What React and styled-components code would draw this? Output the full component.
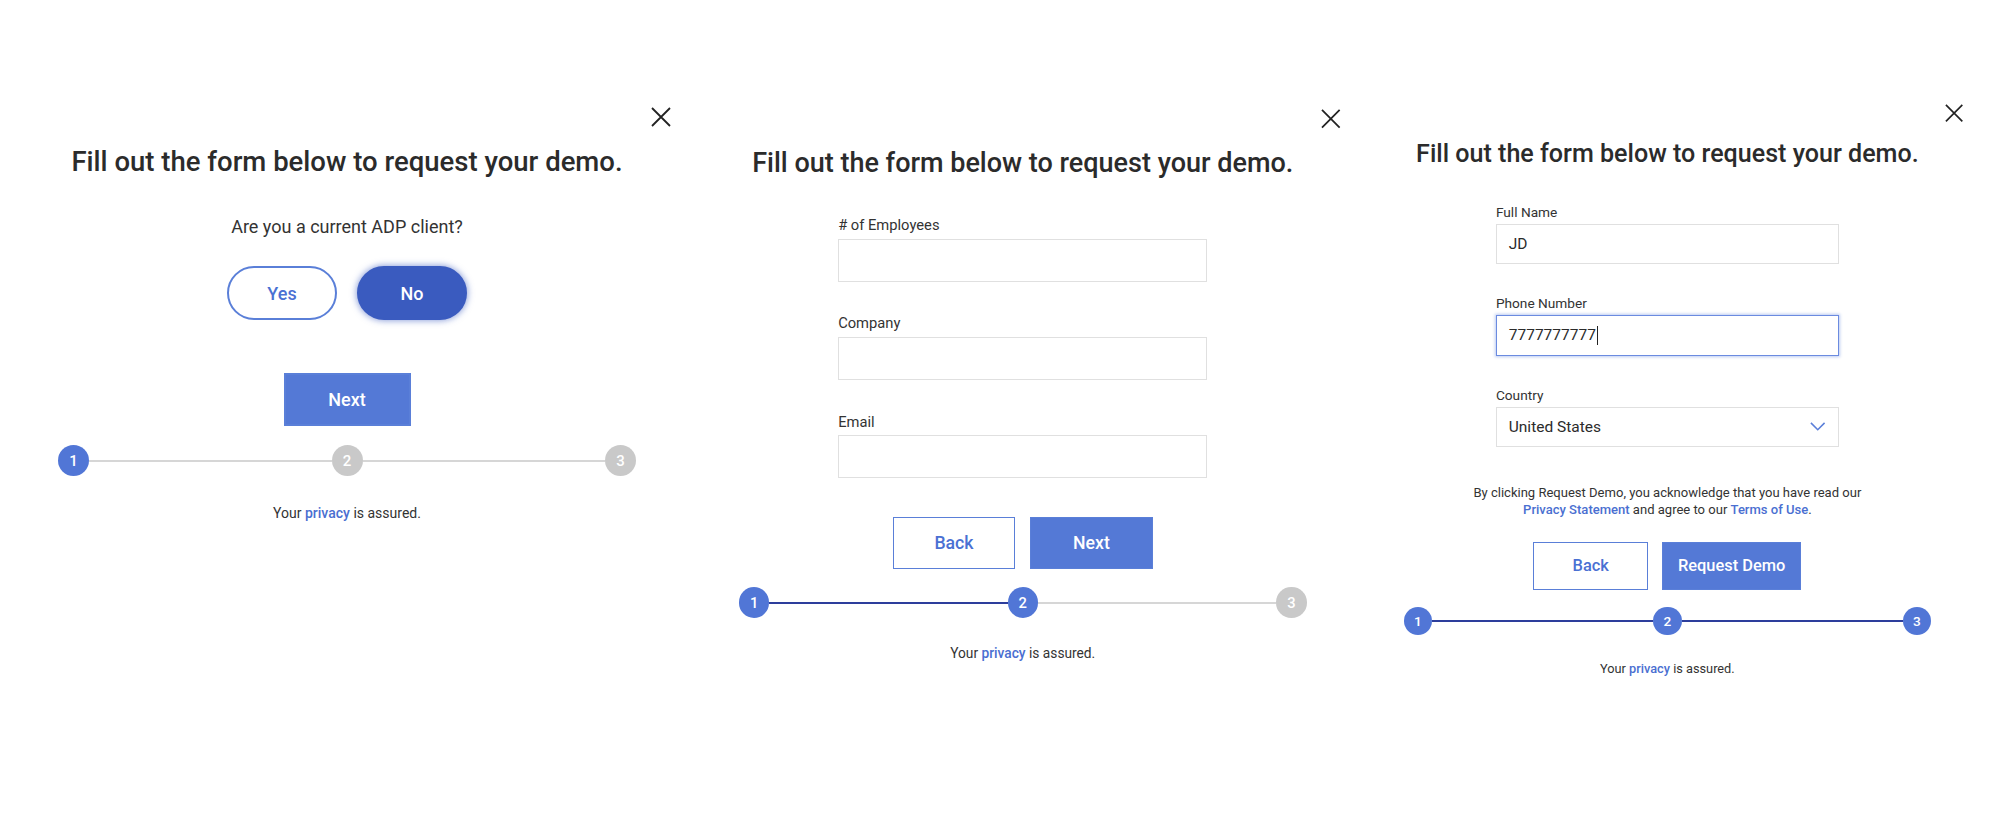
import React from 'react';
import styled, { createGlobalStyle } from 'styled-components';

const GlobalStyle = createGlobalStyle`
  html, body {
    margin: 0;
    background: #ffffff;
    font-family: Roboto, 'Liberation Sans', sans-serif;
    color: #2b2b2b;
  }
`;

const Page = styled.main`
  display: flex;
  align-items: flex-start;
  gap: 100px;
  padding: 71px 0 0 58px;
  min-height: 833px;
  box-sizing: border-box;
`;

const Panel = styled.section`
  position: relative;
  width: 578px;
  zoom: ${(p) => p.$scale};
  margin-top: ${(p) => p.$shift || 0}px;
  margin-left: ${(p) => p.$nudge || 0}px;
  padding-top: 74px;
  display: flex;
  flex-direction: column;
  align-items: center;
`;

const Close = styled.button`
  position: absolute;
  top: 36px;
  right: -35px;
  width: 20px;
  height: 20px;
  padding: 0;
  border: none;
  background: none;
  cursor: pointer;
  color: #222;
`;

const Title = styled.h2`
  margin: 0;
  font-size: 27.5px;
  line-height: 34px;
  font-weight: 500;
  color: #2b2b2b;
  white-space: nowrap;
`;

const Question = styled.p`
  margin: 37px 0 0;
  font-size: 18px;
  line-height: 22px;
  color: #333;
`;

const ChoiceRow = styled.div`
  display: flex;
  gap: 20px;
  margin-top: 28px;
`;

const Pill = styled.button`
  width: 110px;
  height: 54px;
  border-radius: 27px;
  border: 2px solid ${(p) => (p.$selected ? '#3a5bbf' : '#5a7fd8')};
  background: ${(p) => (p.$selected ? '#3a5bbf' : '#fff')};
  color: ${(p) => (p.$selected ? '#fff' : '#4a70d3')};
  box-shadow: ${(p) => (p.$selected ? '0 0 6px 1px rgba(58, 91, 191, 0.55)' : 'none')};
  font-family: inherit;
  font-size: 18px;
  font-weight: 500;
  cursor: pointer;
`;

const ButtonRow = styled.div`
  display: flex;
  justify-content: center;
  gap: 15px;
  margin-top: ${(p) => p.$mt}px;
`;

const Button = styled.button`
  width: ${(p) => p.$width}px;
  height: 53px;
  box-sizing: border-box;
  border: 2px solid #5a7fd8;
  background: ${(p) => (p.$outline ? '#fff' : '#5479d6')};
  color: ${(p) => (p.$outline ? '#4a70d3' : '#fff')};
  font-family: inherit;
  font-size: 18px;
  font-weight: 500;
  cursor: pointer;
`;

const Fields = styled.div`
  width: 376px;
  margin-top: 38px;
  display: flex;
  flex-direction: column;
  gap: 34px;
`;

const Field = styled.label`
  display: flex;
  flex-direction: column;
  gap: 4px;
`;

const Label = styled.span`
  font-size: 15px;
  line-height: 18px;
  color: #333;
`;

const Box = styled.div`
  height: 44px;
  box-sizing: border-box;
  border: 2px solid ${(p) => (p.$focused ? '#6b8be0' : '#e0e0e0')};
  box-shadow: ${(p) => (p.$focused ? '0 0 3px 1px rgba(107, 139, 224, 0.45)' : 'none')};
  padding: 0 13px;
  display: flex;
  align-items: center;
  justify-content: space-between;
  font-size: 17px;
  color: #2b2b2b;
`;

const Value = styled.span`
  display: flex;
  align-items: center;
`;

const Caret = styled.span`
  display: inline-block;
  width: 1.5px;
  height: 20px;
  margin-left: 1px;
  background: #222;
`;

const Consent = styled.p`
  margin: 41px 0 0;
  font-size: 14.3px;
  line-height: 19px;
  text-align: center;
  color: #333;
  white-space: nowrap;
`;

const TextLink = styled.a`
  color: #4a6fd1;
  font-weight: 500;
  text-decoration: none;
`;

const Stepper = styled.div`
  width: 100%;
  margin-top: 19px;
  display: flex;
  align-items: center;
`;

const Dot = styled.span`
  width: 31px;
  height: 31px;
  flex: none;
  border-radius: 50%;
  background: ${(p) => (p.$active ? '#5176d6' : '#c9c9c9')};
  color: #fff;
  font-size: 15px;
  font-weight: 500;
  display: flex;
  align-items: center;
  justify-content: center;
`;

const Track = styled.span`
  flex: 1;
  height: 2px;
  background: ${(p) => (p.$done ? '#2d3e9c' : '#d6d6d6')};
`;

const Privacy = styled.p`
  margin: 28px 0 0;
  font-size: 14px;
  line-height: 18px;
  color: #333;
`;

const CloseIcon = () => (
  <svg width="20" height="20" viewBox="0 0 20 20" fill="none">
    <path d="M1 1 L19 19 M19 1 L1 19" stroke="currentColor" strokeWidth="1.8" />
  </svg>
);

const Chevron = () => (
  <svg width="17" height="10" viewBox="0 0 17 10" fill="none">
    <polyline points="1,1 8.5,8.5 16,1" stroke="#5b7fd9" strokeWidth="1.7" />
  </svg>
);

const Steps = ({ step }) => (
  <Stepper>
    <Dot $active>1</Dot>
    <Track $done={step > 1} />
    <Dot $active={step >= 2}>2</Dot>
    <Track $done={step > 2} />
    <Dot $active={step >= 3}>3</Dot>
  </Stepper>
);

const Footer = () => (
  <Privacy>
    Your <TextLink href="#">privacy</TextLink> is assured.
  </Privacy>
);

const Shell = ({ scale, shift, nudge, children }) => (
  <Panel $scale={scale} $shift={shift} $nudge={nudge}>
    <Close aria-label="Close">
      <CloseIcon />
    </Close>
    <Title>Fill out the form below to request your demo.</Title>
    {children}
  </Panel>
);

export default function App() {
  return (
    <>
      <GlobalStyle />
      <Page>
        <Shell scale={1}>
          <Question>Are you a current ADP client?</Question>
          <ChoiceRow>
            <Pill>Yes</Pill>
            <Pill $selected>No</Pill>
          </ChoiceRow>
          <ButtonRow $mt={53}>
            <Button $width={127}>Next</Button>
          </ButtonRow>
          <Steps step={1} />
          <Footer />
        </Shell>

        <Shell scale={0.982} shift={3} nudge={3}>
          <Fields>
            <Field>
              <Label># of Employees</Label>
              <Box />
            </Field>
            <Field>
              <Label>Company</Label>
              <Box />
            </Field>
            <Field>
              <Label>Email</Label>
              <Box />
            </Field>
          </Fields>
          <ButtonRow $mt={39}>
            <Button $outline $width={125}>Back</Button>
            <Button $width={125}>Next</Button>
          </ButtonRow>
          <Steps step={2} />
          <Footer />
        </Shell>

        <Shell scale={0.912} nudge={-3}>
          <Fields>
            <Field>
              <Label>Full Name</Label>
              <Box>
                <Value>JD</Value>
              </Box>
            </Field>
            <Field>
              <Label>Phone Number</Label>
              <Box $focused>
                <Value>
                  7777777777
                  <Caret />
                </Value>
              </Box>
            </Field>
            <Field>
              <Label>Country</Label>
              <Box>
                <Value>United States</Value>
                <Chevron />
              </Box>
            </Field>
          </Fields>
          <Consent>
            By clicking Request Demo, you acknowledge that you have read our
            <br />
            <TextLink href="#">Privacy Statement</TextLink> and agree to our{' '}
            <TextLink href="#">Terms of Use</TextLink>.
          </Consent>
          <ButtonRow $mt={25}>
            <Button $outline $width={126}>Back</Button>
            <Button $width={153}>Request Demo</Button>
          </ButtonRow>
          <Steps step={3} />
          <Footer />
        </Shell>
      </Page>
    </>
  );
}
